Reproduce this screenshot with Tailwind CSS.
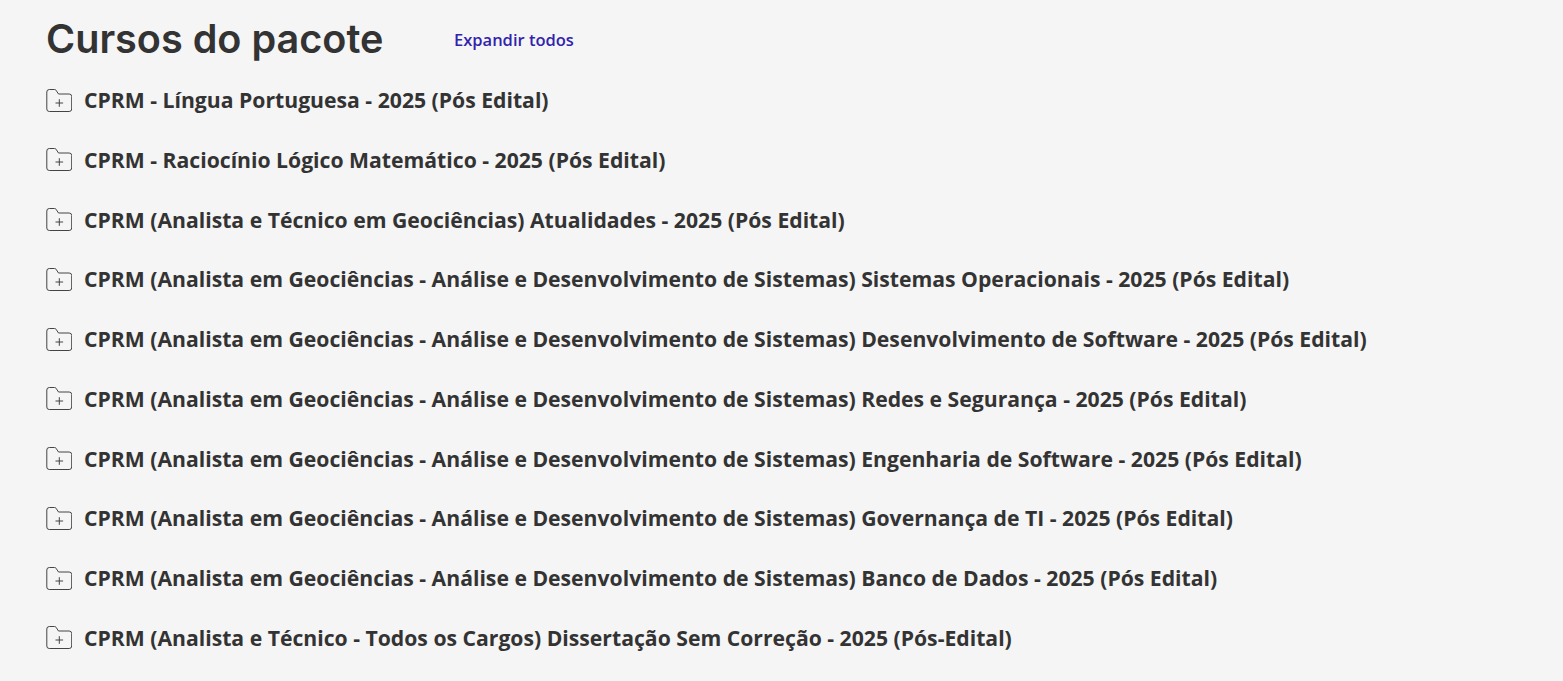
<!DOCTYPE html>
<html lang="pt-BR">
<head>
  <meta charset="UTF-8" />
  <title>Cursos do pacote</title>
  <script src="https://cdn.jsdelivr.net/npm/@tailwindcss/browser@4"></script>
</head>
<body class="bg-[#f5f5f5] text-[#333] font-['Open_Sans',sans-serif] overflow-hidden">
  <main class="pl-[46px] pt-[14px]">
    <!-- Header -->
    <div class="flex items-center h-[50px]">
      <h2 class="w-[408px] text-[39.6px] leading-[50px] font-semibold font-['Inter',sans-serif]">Cursos do pacote</h2>
      <a href="#" class="mt-[2px] text-[16.5px] font-semibold text-[#3123ae]">Expandir todos</a>
    </div>

    <!-- Courses -->
    <ul class="mt-[6.15px]">
      <li class="flex items-center h-[59.75px] gap-3">
        <svg class="w-[26px] h-[23px] shrink-0" viewBox="0 0 26 23" fill="none" stroke="#444" stroke-width="1"><path d="M.8 3A2.500 2.500 0 0 1 3.300 .5H8.500a2 2 0 0 1 1.500.7L12.500 5H23.200a2.500 2.500 0 0 1 2.500 2.500V20A2.500 2.500 0 0 1 23.200 22.500H3.300A2.500 2.500 0 0 1 .8 20z"/><path d="M9.500 14h7.600M13.300 10.200v7.600"/></svg>
        <span class="text-[21.18px] font-bold">CPRM - Língua Portuguesa - 2025 (Pós Edital)</span>
      </li>
      <li class="flex items-center h-[59.75px] gap-3">
        <svg class="w-[26px] h-[23px] shrink-0" viewBox="0 0 26 23" fill="none" stroke="#444" stroke-width="1"><path d="M.8 3A2.500 2.500 0 0 1 3.300 .5H8.500a2 2 0 0 1 1.500.7L12.500 5H23.200a2.500 2.500 0 0 1 2.500 2.500V20A2.500 2.500 0 0 1 23.200 22.500H3.300A2.500 2.500 0 0 1 .8 20z"/><path d="M9.500 14h7.600M13.300 10.200v7.600"/></svg>
        <span class="text-[21.18px] font-bold">CPRM - Raciocínio Lógico Matemático - 2025 (Pós Edital)</span>
      </li>
      <li class="flex items-center h-[59.75px] gap-3">
        <svg class="w-[26px] h-[23px] shrink-0" viewBox="0 0 26 23" fill="none" stroke="#444" stroke-width="1"><path d="M.8 3A2.500 2.500 0 0 1 3.300 .5H8.500a2 2 0 0 1 1.500.7L12.500 5H23.200a2.500 2.500 0 0 1 2.500 2.500V20A2.500 2.500 0 0 1 23.200 22.500H3.300A2.500 2.500 0 0 1 .8 20z"/><path d="M9.500 14h7.600M13.300 10.200v7.600"/></svg>
        <span class="text-[21.18px] font-bold">CPRM (Analista e Técnico em Geociências) Atualidades - 2025 (Pós Edital)</span>
      </li>
      <li class="flex items-center h-[59.75px] gap-3">
        <svg class="w-[26px] h-[23px] shrink-0" viewBox="0 0 26 23" fill="none" stroke="#444" stroke-width="1"><path d="M.8 3A2.500 2.500 0 0 1 3.300 .5H8.500a2 2 0 0 1 1.500.7L12.500 5H23.200a2.500 2.500 0 0 1 2.500 2.500V20A2.500 2.500 0 0 1 23.200 22.500H3.300A2.500 2.500 0 0 1 .8 20z"/><path d="M9.500 14h7.600M13.300 10.200v7.600"/></svg>
        <span class="text-[21.18px] font-bold">CPRM (Analista em Geociências - Análise e Desenvolvimento de Sistemas) Sistemas Operacionais - 2025 (Pós Edital)</span>
      </li>
      <li class="flex items-center h-[59.75px] gap-3">
        <svg class="w-[26px] h-[23px] shrink-0" viewBox="0 0 26 23" fill="none" stroke="#444" stroke-width="1"><path d="M.8 3A2.500 2.500 0 0 1 3.300 .5H8.500a2 2 0 0 1 1.500.7L12.500 5H23.200a2.500 2.500 0 0 1 2.500 2.500V20A2.500 2.500 0 0 1 23.200 22.500H3.300A2.500 2.500 0 0 1 .8 20z"/><path d="M9.500 14h7.600M13.300 10.200v7.600"/></svg>
        <span class="text-[21.18px] font-bold">CPRM (Analista em Geociências - Análise e Desenvolvimento de Sistemas) Desenvolvimento de Software - 2025 (Pós Edital)</span>
      </li>
      <li class="flex items-center h-[59.75px] gap-3">
        <svg class="w-[26px] h-[23px] shrink-0" viewBox="0 0 26 23" fill="none" stroke="#444" stroke-width="1"><path d="M.8 3A2.500 2.500 0 0 1 3.300 .5H8.500a2 2 0 0 1 1.500.7L12.500 5H23.200a2.500 2.500 0 0 1 2.500 2.500V20A2.500 2.500 0 0 1 23.200 22.500H3.300A2.500 2.500 0 0 1 .8 20z"/><path d="M9.500 14h7.600M13.300 10.200v7.600"/></svg>
        <span class="text-[21.18px] font-bold">CPRM (Analista em Geociências - Análise e Desenvolvimento de Sistemas) Redes e Segurança - 2025 (Pós Edital)</span>
      </li>
      <li class="flex items-center h-[59.75px] gap-3">
        <svg class="w-[26px] h-[23px] shrink-0" viewBox="0 0 26 23" fill="none" stroke="#444" stroke-width="1"><path d="M.8 3A2.500 2.500 0 0 1 3.300 .5H8.500a2 2 0 0 1 1.500.7L12.500 5H23.200a2.500 2.500 0 0 1 2.500 2.500V20A2.500 2.500 0 0 1 23.200 22.500H3.300A2.500 2.500 0 0 1 .8 20z"/><path d="M9.500 14h7.600M13.300 10.200v7.600"/></svg>
        <span class="text-[21.18px] font-bold">CPRM (Analista em Geociências - Análise e Desenvolvimento de Sistemas) Engenharia de Software - 2025 (Pós Edital)</span>
      </li>
      <li class="flex items-center h-[59.75px] gap-3">
        <svg class="w-[26px] h-[23px] shrink-0" viewBox="0 0 26 23" fill="none" stroke="#444" stroke-width="1"><path d="M.8 3A2.500 2.500 0 0 1 3.300 .5H8.500a2 2 0 0 1 1.500.7L12.500 5H23.200a2.500 2.500 0 0 1 2.500 2.500V20A2.500 2.500 0 0 1 23.200 22.500H3.300A2.500 2.500 0 0 1 .8 20z"/><path d="M9.500 14h7.600M13.300 10.200v7.600"/></svg>
        <span class="text-[21.18px] font-bold">CPRM (Analista em Geociências - Análise e Desenvolvimento de Sistemas) Governança de TI - 2025 (Pós Edital)</span>
      </li>
      <li class="flex items-center h-[59.75px] gap-3">
        <svg class="w-[26px] h-[23px] shrink-0" viewBox="0 0 26 23" fill="none" stroke="#444" stroke-width="1"><path d="M.8 3A2.500 2.500 0 0 1 3.300 .5H8.500a2 2 0 0 1 1.500.7L12.500 5H23.200a2.500 2.500 0 0 1 2.500 2.500V20A2.500 2.500 0 0 1 23.200 22.500H3.300A2.500 2.500 0 0 1 .8 20z"/><path d="M9.500 14h7.600M13.300 10.200v7.600"/></svg>
        <span class="text-[21.18px] font-bold">CPRM (Analista em Geociências - Análise e Desenvolvimento de Sistemas) Banco de Dados - 2025 (Pós Edital)</span>
      </li>
      <li class="flex items-center h-[59.75px] gap-3">
        <svg class="w-[26px] h-[23px] shrink-0" viewBox="0 0 26 23" fill="none" stroke="#444" stroke-width="1"><path d="M.8 3A2.500 2.500 0 0 1 3.300 .5H8.500a2 2 0 0 1 1.500.7L12.500 5H23.200a2.500 2.500 0 0 1 2.500 2.500V20A2.500 2.500 0 0 1 23.200 22.500H3.300A2.500 2.500 0 0 1 .8 20z"/><path d="M9.500 14h7.600M13.300 10.200v7.600"/></svg>
        <span class="text-[21.18px] font-bold">CPRM (Analista e Técnico - Todos os Cargos) Dissertação Sem Correção - 2025 (Pós-Edital)</span>
      </li>
    </ul>
  </main>
</body>
</html>
